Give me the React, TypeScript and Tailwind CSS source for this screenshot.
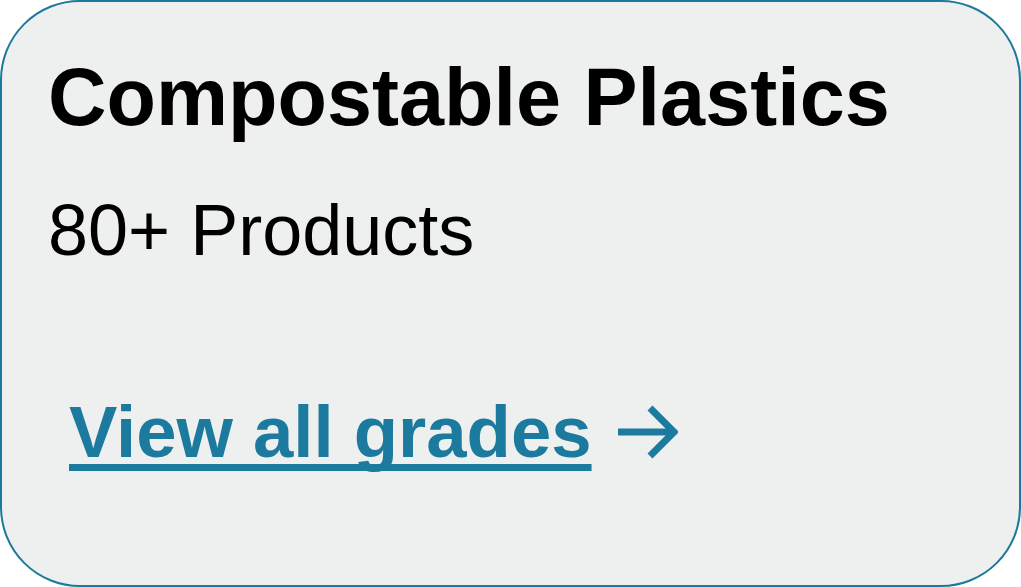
const ArrowRight = () => (
  <svg width="62" height="54" viewBox="0 0 62 54" fill="none" stroke="currentColor" strokeWidth="7" className="shrink-0">
    <path d="M2 27 H58" />
    <path d="M34 3 L58 27 L34 51" strokeLinejoin="miter" />
  </svg>
);

export default function App() {
  return (
    <div className="w-[1021px] h-[587px] bg-white">
      <div
        className="w-full h-full rounded-[80px] border-2 border-[#1b7a9b] bg-[#eef0f0] pl-[46px] pt-[55px] flex flex-col"
        style={{ fontFamily: '"Liberation Sans", Arial, sans-serif' }}
      >
        <h2 className="text-[81px] leading-none font-bold text-black">Compostable Plastics</h2>
        <p className="mt-[56px] text-[72px] leading-none text-black">80+ Products</p>
        <a
          href="#"
          className="mt-[130px] ml-[21px] flex items-center gap-[24px] text-[72.5px] leading-none font-bold text-[#1b7a9e]"
        >
          <span className="underline decoration-[7px] underline-offset-[7px] [text-decoration-skip-ink:none]">View all grades</span>
          <ArrowRight />
        </a>
      </div>
    </div>
  );
}
